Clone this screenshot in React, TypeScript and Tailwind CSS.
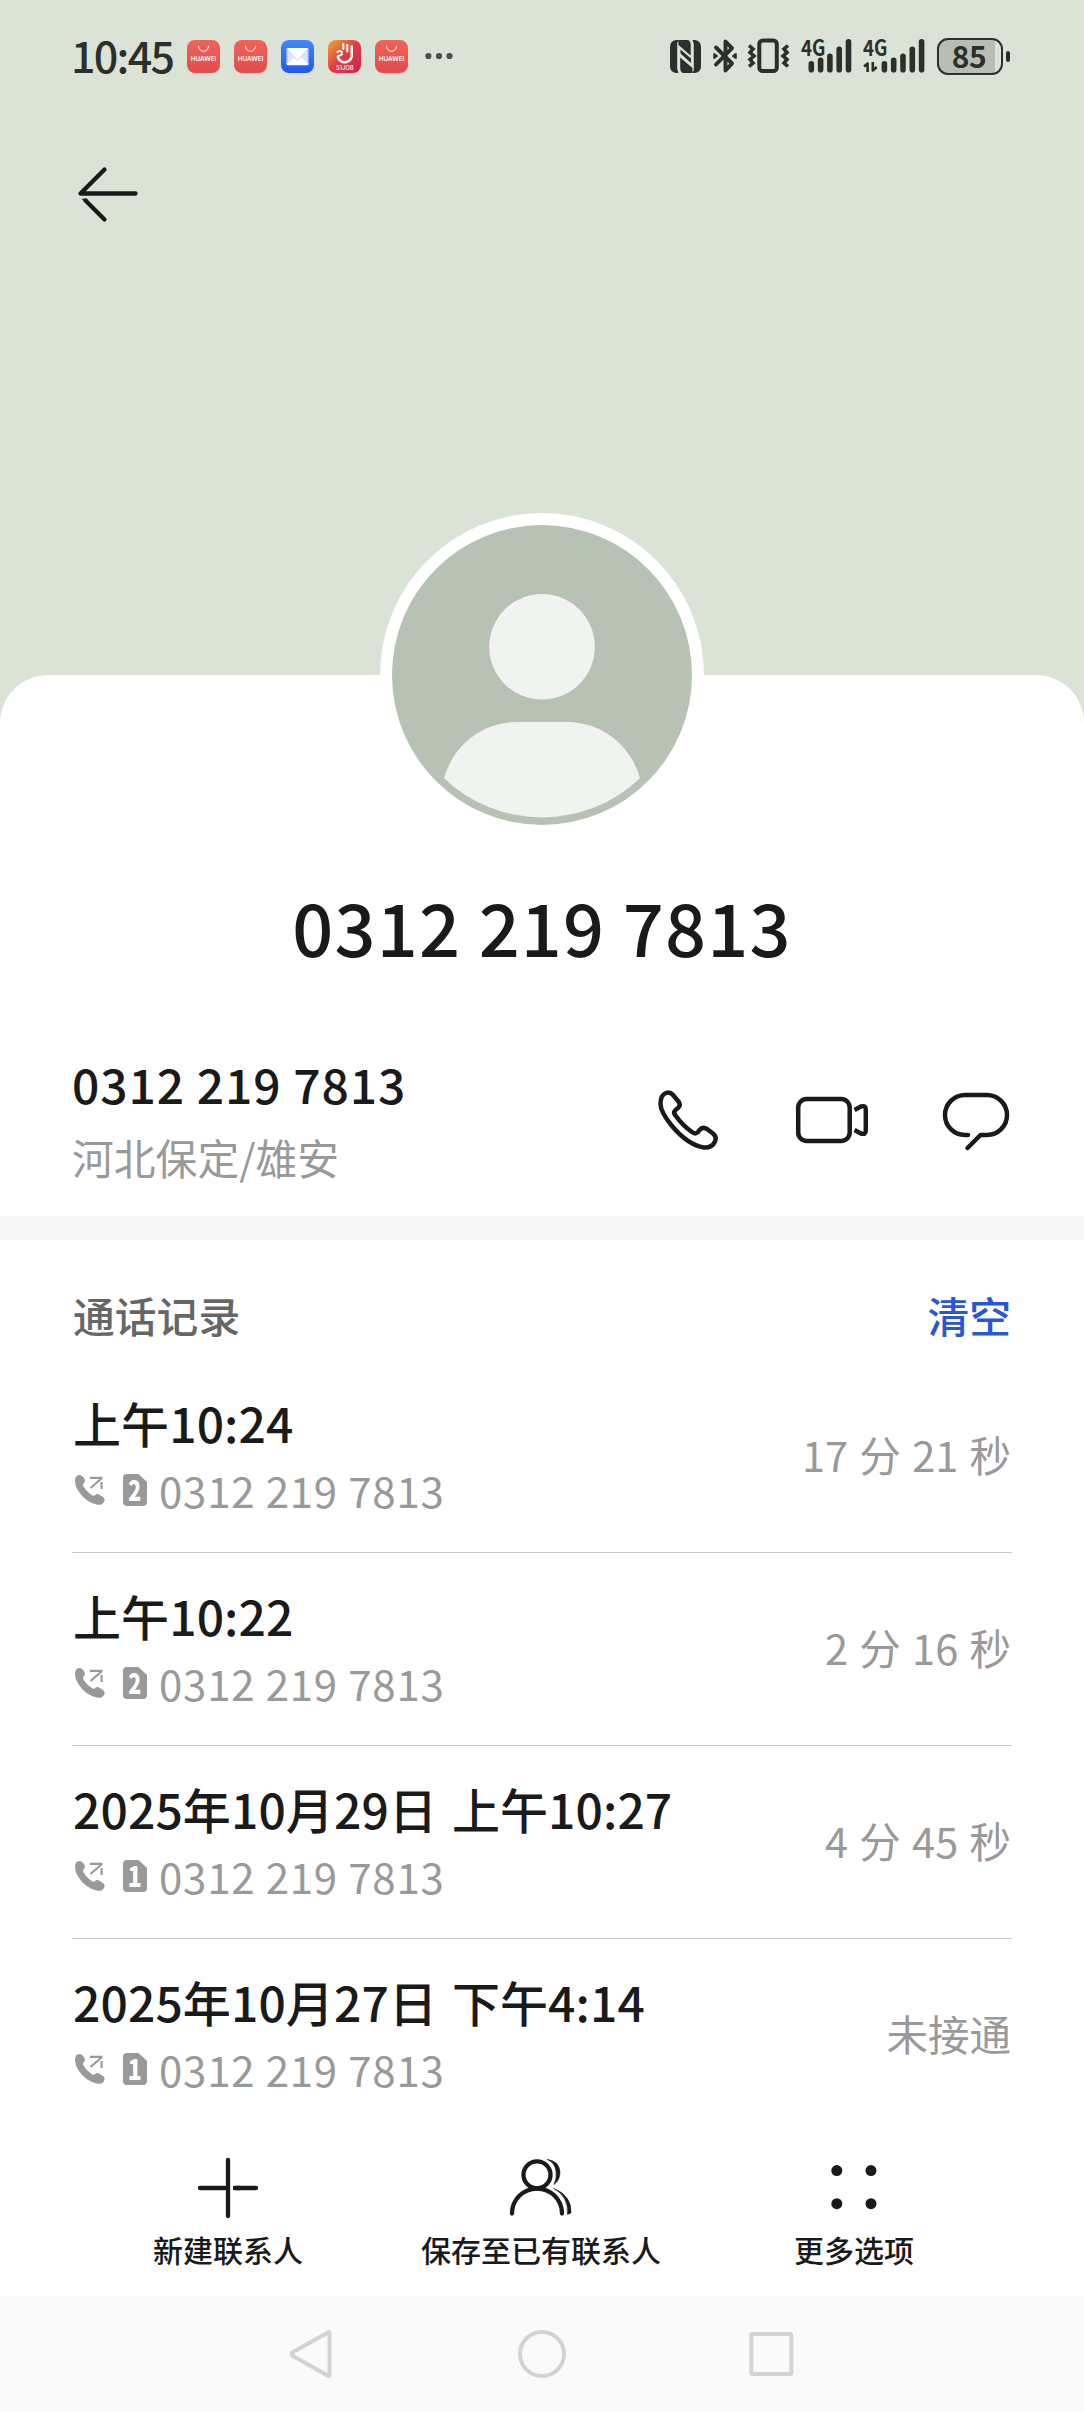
import React from "react";

const FONT = "font-['Noto_Sans_CJK_SC','Noto_Sans',sans-serif]";

type Call = { time: string; sim: number; number: string; duration: string };

const calls: Call[] = [
  { time: "上午10:24", sim: 2, number: "0312 219 7813", duration: "17 分 21 秒" },
  { time: "上午10:22", sim: 2, number: "0312 219 7813", duration: "2 分 16 秒" },
  { time: "2025年10月29日 上午10:27", sim: 1, number: "0312 219 7813", duration: "4 分 45 秒" },
  { time: "2025年10月27日 下午4:14", sim: 1, number: "0312 219 7813", duration: "未接通" },
];

function HuaweiStore() {
  return (
    <svg width="33" height="33" viewBox="0 0 33 33" className="shrink-0">
      <defs>
        <linearGradient id="store" x1="0" y1="0" x2="0" y2="1">
          <stop offset="0" stopColor="#f0625c" />
          <stop offset="1" stopColor="#e34c4b" />
        </linearGradient>
      </defs>
      <rect width="33" height="33" rx="8" fill="url(#store)" />
      <path d="M11.5 6.3a5 5 0 0 0 10 0" fill="none" stroke="#fff" strokeWidth="1" strokeLinecap="round" />
      <text x="16.5" y="21" textAnchor="middle" textLength="25.5" lengthAdjust="spacingAndGlyphs" fontSize="5.6" fontWeight="600" fill="#fff" fontFamily="Inter, sans-serif">
        HUAWEI
      </text>
    </svg>
  );
}

function MailApp() {
  return (
    <svg width="33" height="33" viewBox="0 0 33 33" className="shrink-0">
      <defs>
        <linearGradient id="mail" x1="0" y1="0" x2="0" y2="1">
          <stop offset="0" stopColor="#3f8af7" />
          <stop offset="1" stopColor="#2557ee" />
        </linearGradient>
      </defs>
      <rect width="33" height="33" rx="8" fill="url(#mail)" />
      <rect x="5.5" y="8" width="22" height="17.3" rx="1.5" fill="#fff" />
      <path d="M6 9.5v14.5l8-7.5zM27 9.5v14.5l-8-7.5z" fill="#dbe6fc" />
      <path d="M6 9l9 10q1.500 1.600 3 0l9-10" fill="#fff" stroke="#b9ccf7" strokeWidth="0.800" />
      <path d="M6 10.500v13M27 10.500v13" stroke="#3a6cf0" strokeWidth="0.800" strokeDasharray="1.200 1.400" />
    </svg>
  );
}

function JobApp() {
  return (
    <svg width="33" height="33" viewBox="0 0 33 33" className="shrink-0">
      <defs>
        <linearGradient id="job" x1="0" y1="0" x2="1" y2="1">
          <stop offset="0" stopColor="#f0a832" />
          <stop offset="0.500" stopColor="#dc3c44" />
          <stop offset="1" stopColor="#cf2550" />
        </linearGradient>
      </defs>
      <rect width="33" height="33" rx="8" fill="url(#job)" />
      <g fill="none" stroke="#fff" strokeLinecap="round" strokeLinejoin="round">
        <path d="M23.700 6.500v7.500a7 7 0 0 1-14 2.500" strokeWidth="2.500" />
        <path d="M9.300 12.200q2.400-2.400 4.500-.2M10.500 16q2.200-.4 3.600-1.800" strokeWidth="1.900" />
        <path d="M15.300 4.200v4.600M19.300 5.200v6.300" strokeWidth="2.200" />
      </g>
      <text x="16.800" y="29.900" textAnchor="middle" textLength="17.500" lengthAdjust="spacingAndGlyphs" fontSize="6" fontWeight="500" fill="#fff" fontFamily="Inter, sans-serif">
        51JOB
      </text>
    </svg>
  );
}

function Signal({ data = false }: { data?: boolean }) {
  const heights = [11.5, 15, 19, 26, 33.5];
  const first = data ? 21.4 : 10.3;
  return (
    <svg width={data ? 62 : 50} height="36" viewBox={data ? "0 0 62 36" : "0 0 50 36"} className="shrink-0 overflow-visible">
      <text x="0" y="17.500" textLength="24.500" lengthAdjust="spacingAndGlyphs" fontSize="22.500" fontWeight="700" fill="#2d2f2b" fontFamily="'Noto Sans CJK SC', sans-serif">
        4G
      </text>
      {heights.map((h, i) => (
        <line key={h} x1={first + i * 9.3} x2={first + i * 9.3} y1={34.5 - h + 2.8} y2={31.7} stroke="#2d2f2b" strokeWidth="5.600" strokeLinecap="round" />
      ))}
      {data && (
        <path d="M4.600 34V25.500L1 28.400M9.800 24v8.500L13.800 29" fill="none" stroke="#2d2f2b" strokeWidth="2.600" strokeLinejoin="round" />
      )}
    </svg>
  );
}

function StatusBar() {
  return (
    <div className="flex h-[112px] items-center justify-between pl-[71px] pr-[74px] text-[#2d2f2b]">
      <div className="flex items-center">
        <span className="-mt-1 w-[116px] whitespace-nowrap text-[43px] font-medium leading-[44px] tracking-[-1.700px]">10:45</span>
        <div className="flex gap-[14px]">
          <HuaweiStore />
          <HuaweiStore />
          <MailApp />
          <JobApp />
          <HuaweiStore />
        </div>
        <svg width="28" height="8" viewBox="0 0 28 8" className="ml-[17px]" fill="#4a4e49">
          <circle cx="3.400" cy="4" r="3.100" />
          <circle cx="14" cy="4" r="3.100" />
          <circle cx="24.500" cy="4" r="3.100" />
        </svg>
      </div>
      <div className="flex items-center">
        <svg width="31" height="33" viewBox="0 0 31 33">
          <path d="M6 0H8.500L7.200 3V29L8.500 33H6Q0 32 0 26V7Q0 1 6 0Z" fill="#2d2f2b" />
          <path d="M25 0H22.500L23.800 4V30L22.500 33H25Q31 32 31 26V7Q31 1 25 0Z" fill="#2d2f2b" />
          <path d="M8.200 0H18Q20.700 1 20.700 5V15.500L8.500 5Z M22.500 33H13Q10.200 32 10.200 28V17.500L22.500 28Z" fill="#2d2f2b" />
          <path d="M10.500 9.500L21 18.600V23L10.500 13.500Z" fill="#2d2f2b" />
        </svg>
        <svg width="26" height="36" viewBox="0 0 26 36" className="ml-[11px]" fill="none" stroke="#2d2f2b" strokeWidth="3.900" strokeLinejoin="round" strokeLinecap="round">
          <path d="M4 9.500L20 25.500L13.500 32.500V3.500L20 10.200L4 26.500" />
          <path d="M2.200 16v4L5 18ZM23.800 16v4L21 18Z" strokeWidth="2" fill="#2d2f2b" />
        </svg>
        <svg width="43" height="36" viewBox="0 0 43 36" className="ml-[9px]" fill="none" stroke="#2d2f2b">
          <rect x="12.300" y="2.500" width="17.500" height="30.500" rx="3.500" strokeWidth="4" />
          <path d="M2 7.500l4 3.500l-3 3.500l4 3.500l-4 3.500l3 3.500l-4 3.500" strokeWidth="3.600" />
          <path d="M41 7.500l-4 3.500l3 3.500l-4 3.500l4 3.500l-3 3.500l4 3.500" strokeWidth="3.600" />
        </svg>
        <div className="ml-[11px]"><Signal /></div>
        <div className="ml-[12px]"><Signal data /></div>
        <div className="ml-[12px] flex items-center gap-[3px]">
          <div className="flex h-[37px] w-[66px] items-center justify-center rounded-[11px] border-[2.500px] border-[#2d2f2b] bg-linear-to-r from-[#b9beb5] from-[91%] to-transparent to-[91%] text-[30px] font-bold leading-none tracking-[-0.500px]">
            <span className="-ml-0.5 -mt-[3px]">85</span>
          </div>
          <div className="h-[11px] w-[4px] rounded-sm bg-[#2d2f2b]" />
        </div>
      </div>
    </div>
  );
}

function Avatar() {
  return (
    <div className="relative mx-auto -mt-[162px] h-[324px] w-[324px] rounded-full bg-white p-3">
      <svg width="300" height="300" viewBox="0 0 300 300">
        <circle cx="150" cy="150" r="150" fill="#b7c1b4" />
        <circle cx="150" cy="121.800" r="52.800" fill="#f0f3f0" />
        <path d="M52 253.300A76 76 0 0 1 124 197H176A76 76 0 0 1 248 253.300A142.400 142.400 0 0 1 52 253.300Z" fill="#f0f3f0" />
      </svg>
    </div>
  );
}

function OutgoingIcon() {
  return (
    <svg width="32" height="32" viewBox="0 0 32 32" className="shrink-0">
      <path d="M1 7Q1.200 1.200 5.200 1Q8.500 1 10.700 5.500Q11.500 7.500 9.500 9.500Q8.600 10.500 9.300 12Q12.500 17.800 18.500 21.500Q19.800 22.200 20.900 21.200Q22.800 19.300 25.500 20.700L29 23Q31.600 25 30 28Q28 31.300 23.500 30.800Q11 28 4 16.500Q1 11.500 1 7Z" fill="#999" />
      <path d="M16.500 14L27.800 4.200M16 3.900H28.500M27.600 8V15" fill="none" stroke="#999" strokeWidth="2.100" />
    </svg>
  );
}

function SimIcon({ n }: { n: number }) {
  return (
    <svg width="24" height="32" viewBox="0 0 24 32" className="shrink-0 overflow-visible">
      <path d="M4 0H15.500L24 8V28Q24 32 20 32H4Q0 32 0 28V4Q0 0 4 0Z" fill="#999" />
      <text x="11.800" y="26.700" textAnchor="middle" fontSize="28" fontWeight="900" fill="#fff" fontFamily="'Noto Sans CJK SC', sans-serif" textLength={n === 2 ? 13 : 14} lengthAdjust="spacingAndGlyphs">
        {n}
      </text>
    </svg>
  );
}

function CallRow({ call, last }: { call: Call; last: boolean }) {
  return (
    <div className={`flex h-[193px] justify-between pt-[32px] pr-[1px] pl-[1px] ${last ? "" : "border-b border-[#cacaca]"}`}>
      <div>
        <div className="h-[60px] whitespace-nowrap text-[48px] font-medium leading-[60px] tracking-[0.100px] text-[#1a1a1a] [word-spacing:4px]">{call.time}</div>
        <div className="mt-[12px] flex h-[52px] items-center pl-px">
          <OutgoingIcon />
          <div className="ml-[17px] flex"><SimIcon n={call.sim} /></div>
          <span className="ml-[12px] whitespace-nowrap text-[42px] leading-[52px] tracking-[0.800px] text-[#999]">{call.number}</span>
        </div>
      </div>
      <div className="mt-[36px] h-[52px] whitespace-nowrap text-[41.500px] leading-[52px] text-[#999] [word-spacing:2px]">{call.duration}</div>
    </div>
  );
}

export default function App() {
  return (
    <div className={`flex h-[2412px] w-[1084px] flex-col overflow-hidden bg-[#dbe3d7] ${FONT}`}>
      <header className="h-[675px] shrink-0">
        <StatusBar />
        <svg width="62" height="58" viewBox="0 0 62 58" className="ml-[77px] mt-[53px]" fill="none" stroke="#1a1a1a" strokeWidth="4.300" strokeLinecap="round">
          <path d="M27.500 4.500L3.500 28.500H58.500" strokeLinejoin="round" />
          <path d="M8.500 35.500L27.500 54.500" />
          <path d="M4.500 33.700H10L12 37H8Z" fill="#1a1a1a" stroke="none" />
        </svg>
      </header>

      <main className="flex-1 rounded-t-[48px] bg-white">
        <Avatar />
        <h1 className="mt-[47px] h-[84px] whitespace-nowrap text-center text-[72px] font-medium leading-[84px] tracking-[1.200px] text-[#1a1a1a]">0312 219 7813</h1>

        <section className="mt-[84px] flex h-[164px] justify-between pl-[72px] pr-[72px]">
          <div>
            <div className="h-[62px] whitespace-nowrap text-[48px] font-medium leading-[62px] tracking-[0.900px] text-[#1a1a1a]">0312 219 7813</div>
            <div className="mt-[16px] h-[54px] whitespace-nowrap text-[41.800px] leading-[54px] text-[#999]">河北保定/雄安</div>
          </div>
          <div className="mt-[36px] flex h-[64px] items-start text-[#1a1a1a]">
            <svg width="64" height="64" viewBox="656 1088 64 64" fill="none" stroke="currentColor" strokeWidth="4.500" strokeLinejoin="round">
              <path d="M660.500 1104Q660.500 1095 666 1093Q670 1091.500 673 1095L678.500 1101.500Q681.500 1105 678 1108L675.500 1110Q673 1112.500 675.500 1115.500Q683 1126 692.500 1132.300Q695.500 1134.500 698 1132L700 1129.500Q703 1126.500 707 1129L713 1133.500Q717 1137 715 1141.500Q712 1148 704 1147.500Q688 1145 672 1126Q660.500 1112 660.500 1104Z" />
            </svg>
            <svg width="74" height="64" viewBox="795 1088 74 64" className="ml-[75px]" fill="none" stroke="currentColor" strokeWidth="4.500" strokeLinejoin="round">
              <rect x="798.200" y="1099" width="51.500" height="42" rx="8.500" />
              <path d="M854.500 1110L861 1106.500Q865.800 1105 865.800 1109.500V1130.500Q865.800 1135 861 1133.500L854.500 1130" />
            </svg>
            <svg width="70" height="64" viewBox="942 1088 70 64" className="ml-[73px]" fill="none" stroke="currentColor" strokeWidth="4.500" strokeLinecap="round" strokeLinejoin="round">
              <path d="M968 1135H965A20 20 0 0 1 965 1095H987A20 20 0 0 1 987 1135H980.500L967.500 1148" />
            </svg>
          </div>
        </section>

        <div className="h-6 bg-[#f6f6f6]" />

        <section className="px-[72px]">
          <div className="flex h-[120px] justify-between px-[1px] pt-[48px] text-[41.800px] font-medium leading-[54px]">
            <h2 className="text-[#666]">通话记录</h2>
            <button className="h-[54px] text-[#2a57d5]">清空</button>
          </div>
          {calls.map((c, i) => (
            <CallRow key={i} call={c} last={i === calls.length - 1} />
          ))}
        </section>

        <section className="flex h-[164px] justify-center pr-[2px] text-[30px] font-medium leading-[40px] text-[#1a1a1a]">
          <div className="flex w-[313px] flex-col items-center pt-6">
            <svg width="64" height="64" viewBox="196 2156 64 64" fill="none" stroke="currentColor" strokeWidth="4.300" strokeLinecap="round">
              <path d="M228 2160V2216M200 2188H225" />
              <path d="M236 2188H256" />
              <path d="M233 2188H240" strokeLinecap="butt" />
            </svg>
            <span className="mt-[9px]">新建联系人</span>
          </div>
          <div className="flex w-[313px] flex-col items-center pt-6">
            <svg width="64" height="64" viewBox="510 2156 64 64" fill="none" stroke="currentColor" strokeWidth="4.300" strokeLinecap="round">
              <circle cx="538" cy="2174.800" r="13.500" />
              <path d="M513 2213.500A25 25 0 0 1 563 2213.500" />
              <path d="M548.500 2159.500Q560.500 2161 561 2172.500Q561 2180 555 2184.500Q558 2178 557 2171Q556 2163 548.500 2159.500ZM555 2188.500Q573 2196 572 2213L568.500 2214.500Q570 2197 555 2188.500Z" fill="currentColor" stroke="currentColor" strokeWidth="0.600" />
            </svg>
            <span className="mt-[9px]">保存至已有联系人</span>
          </div>
          <div className="flex w-[313px] flex-col items-center pt-6">
            <svg width="64" height="64" viewBox="822 2156 64 64" fill="currentColor">
              <circle cx="836.800" cy="2170.600" r="5.500" />
              <circle cx="871" cy="2170.600" r="5.500" />
              <circle cx="836.800" cy="2203.700" r="5.500" />
              <circle cx="871" cy="2203.700" r="5.500" />
            </svg>
            <span className="mt-[9px]">更多选项</span>
          </div>
        </section>

        <nav className="flex h-[117px] items-center justify-center gap-[177px] bg-[#fafafa] pb-px">
          <svg width="52" height="52" viewBox="287 2328 52 52" className="overflow-visible" fill="none" stroke="#d3d3d3" strokeWidth="4" strokeLinejoin="round">
            <path d="M328 2332.500Q329.500 2331 329.500 2333.500V2374.500Q329.500 2377 327.500 2375.500L293 2356Q290 2354 293 2352Z" />
          </svg>
          <svg width="52" height="52" viewBox="516 2328 52 52" fill="none" stroke="#d3d3d3" strokeWidth="4">
            <circle cx="542" cy="2354" r="22" />
          </svg>
          <svg width="52" height="52" viewBox="745 2328 52 52" fill="none" stroke="#d3d3d3" strokeWidth="4">
            <rect x="751.300" y="2334" width="40" height="40" rx="1.500" />
          </svg>
        </nav>
      </main>
    </div>
  );
}
